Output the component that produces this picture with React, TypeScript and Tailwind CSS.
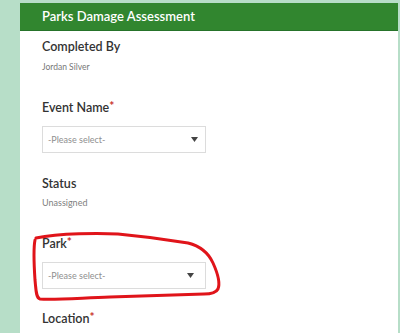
const font = { fontFamily: "Lato, 'Open Sans', sans-serif" };

const Label = ({ text, req, className }: { text: string; req?: boolean; className: string }) => (
  <div className={`text-[12.5px] leading-4 font-semibold text-[#333] ${className}`}>
    {text}
    {req && <span className="text-[#c9302c] text-[12px] font-bold relative -top-[2px]">*</span>}
  </div>
);

const Select = ({ className, arrowPad }: { className: string; arrowPad: string }) => (
  <div
    className={`w-[164px] h-[27px] border border-[#dcdcdc] bg-white flex items-center justify-between pl-[5px] ${arrowPad} ${className}`}
  >
    <span className="text-[9px] text-[#8f8f8f]">-Please select-</span>
    <svg width="7" height="5" viewBox="0 0 7 5">
      <path d="M0 0h7L3.5 5z" fill="#444" />
    </svg>
  </div>
);

export default function App() {
  return (
    <div className="min-h-screen bg-[#b7dec8] pt-[3px] pl-[20px] pr-[2px]" style={font}>
      <div className="relative bg-white h-[330px] overflow-hidden">
        <div className="h-[28px] bg-[#31862f] border-b border-[#26732a] px-[22px] flex items-center text-white text-[13px] font-semibold">
          Parks Damage Assessment
        </div>
        <div className="px-[22px]">
          <Label text="Completed By" className="mt-[8px]" />
          <div className="mt-[6px] text-[8.5px] leading-3 text-[#777]">Jordan Silver</div>
          <Label text="Event Name" req className="mt-[27px]" />
          <Select className="mt-[10px]" arrowPad="pr-[7px]" />
          <Label text="Status" className="mt-[23px]" />
          <div className="mt-[5px] text-[9px] leading-3 text-[#808080]">Unassigned</div>
          <Label text="Park" req className="mt-[27px]" />
          <Select className="mt-[10px]" arrowPad="pr-[11px]" />
          <Label text="Location" req className="mt-[22px]" />
        </div>
        <svg
          className="absolute left-0 top-0 pointer-events-none"
          width="378"
          height="330"
          viewBox="20 3 378 330"
        >
          <path
            d="M36 238 C60 233 100 233 118 234 C140 236 170 240 188 243 C200 246 208 252 213 263 C218 274 220 284 218 289 C216 293 211 294 204 294 C170 295 140 296 110 297 C80 298 55 300 40 299 C36 298 36 290 35 280 C34 265 33 250 35 240"
            fill="none"
            stroke="#e0141a"
            strokeWidth="3"
            strokeLinecap="round"
          />
        </svg>
      </div>
    </div>
  );
}
